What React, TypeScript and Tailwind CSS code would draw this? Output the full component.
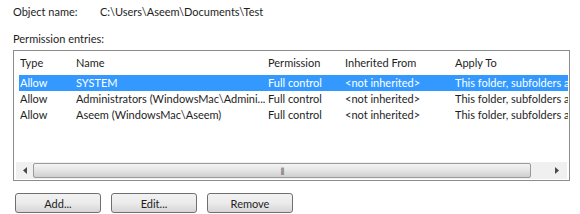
const cols = [
  { label: 'Type', w: 'w-[56px]' },
  { label: 'Name', w: 'w-[192px]' },
  { label: 'Permission', w: 'w-[77px]' },
  { label: 'Inherited From', w: 'w-[110px]' },
  { label: 'Apply To', w: 'flex-1' },
];

const rows = [
  ['Allow', 'SYSTEM', 'Full control', '<not inherited>', 'This folder, subfolders and files'],
  ['Allow', 'Administrators (WindowsMac\\Admini...', 'Full control', '<not inherited>', 'This folder, subfolders and files'],
  ['Allow', 'Aseem (WindowsMac\\Aseem)', 'Full control', '<not inherited>', 'This folder, subfolders and files'],
];

export default function App() {
  return (
    <div className="w-[580px] h-[214px] overflow-hidden bg-white text-[11px] text-[#1e1e1e] font-['Lato',sans-serif] leading-[16px]">
      {/* Object name */}
      <div className="flex pl-[13px] pt-[4px]">
        <span className="w-[87px]">Object name:</span>
        <span>C:\Users\Aseem\Documents\Test</span>
      </div>
      <div className="pl-[13px] mt-[11px]">Permission entries:</div>

      {/* List view */}
      <div className="ml-[13px] mt-[3px] w-[557px] h-[131px] border border-[#8c8c8c] flex flex-col">
        <div className="flex h-[24px] items-center pl-[6px] shrink-0">
          {cols.map((c) => (
            <div key={c.label} className={`${c.w} whitespace-nowrap overflow-hidden`}>
              {c.label}
            </div>
          ))}
        </div>
        <div className="flex-1">
          {rows.map((r, i) => (
            <div
              key={i}
              className={`flex h-[16px] items-center ml-[5px] mr-[1px] pl-[1px] ${
                i === 0 ? 'bg-[#3399ff] text-white' : ''
              }`}
            >
              {r.map((cell, j) => (
                <div key={j} className={`${cols[j].w} whitespace-nowrap overflow-hidden`}>
                  {cell}
                </div>
              ))}
            </div>
          ))}
        </div>
        {/* Horizontal scrollbar */}
        <div className="flex h-[17px] items-center mx-[2px] mb-[1px] bg-[#f0f0f0] shrink-0">
          <div className="w-[17px] h-full flex items-center justify-center">
            <svg width="4" height="7" viewBox="0 0 4 7">
              <path d="M4 0 L0 3.5 L4 7 Z" fill="#4a4a4a" />
            </svg>
          </div>
          <div className="flex-1 h-[15px] rounded-[2px] border border-[#9a9a9a] bg-gradient-to-b from-[#f4f4f4] via-[#e4e4e4] to-[#cfcfcf] flex items-center justify-center">
            <span className="text-[8px] leading-none text-[#555] tracking-[-1px]">|||</span>
          </div>
          <div className="w-[36px] h-full flex items-center justify-end pr-[8px]">
            <svg width="4" height="7" viewBox="0 0 4 7">
              <path d="M0 0 L4 3.5 L0 7 Z" fill="#4a4a4a" />
            </svg>
          </div>
        </div>
      </div>

      {/* Buttons */}
      <div className="flex gap-[10px] ml-[15px] mt-[12px]">
        {['Add...', 'Edit...', 'Remove'].map((b) => (
          <button
            key={b}
            className="w-[86px] h-[20px] rounded-[3px] border border-[#707070] bg-gradient-to-b from-[#f2f2f2] via-[#ebebeb] to-[#d6d6d6] text-[11px] leading-none text-[#1e1e1e]"
          >
            {b}
          </button>
        ))}
      </div>
    </div>
  );
}
